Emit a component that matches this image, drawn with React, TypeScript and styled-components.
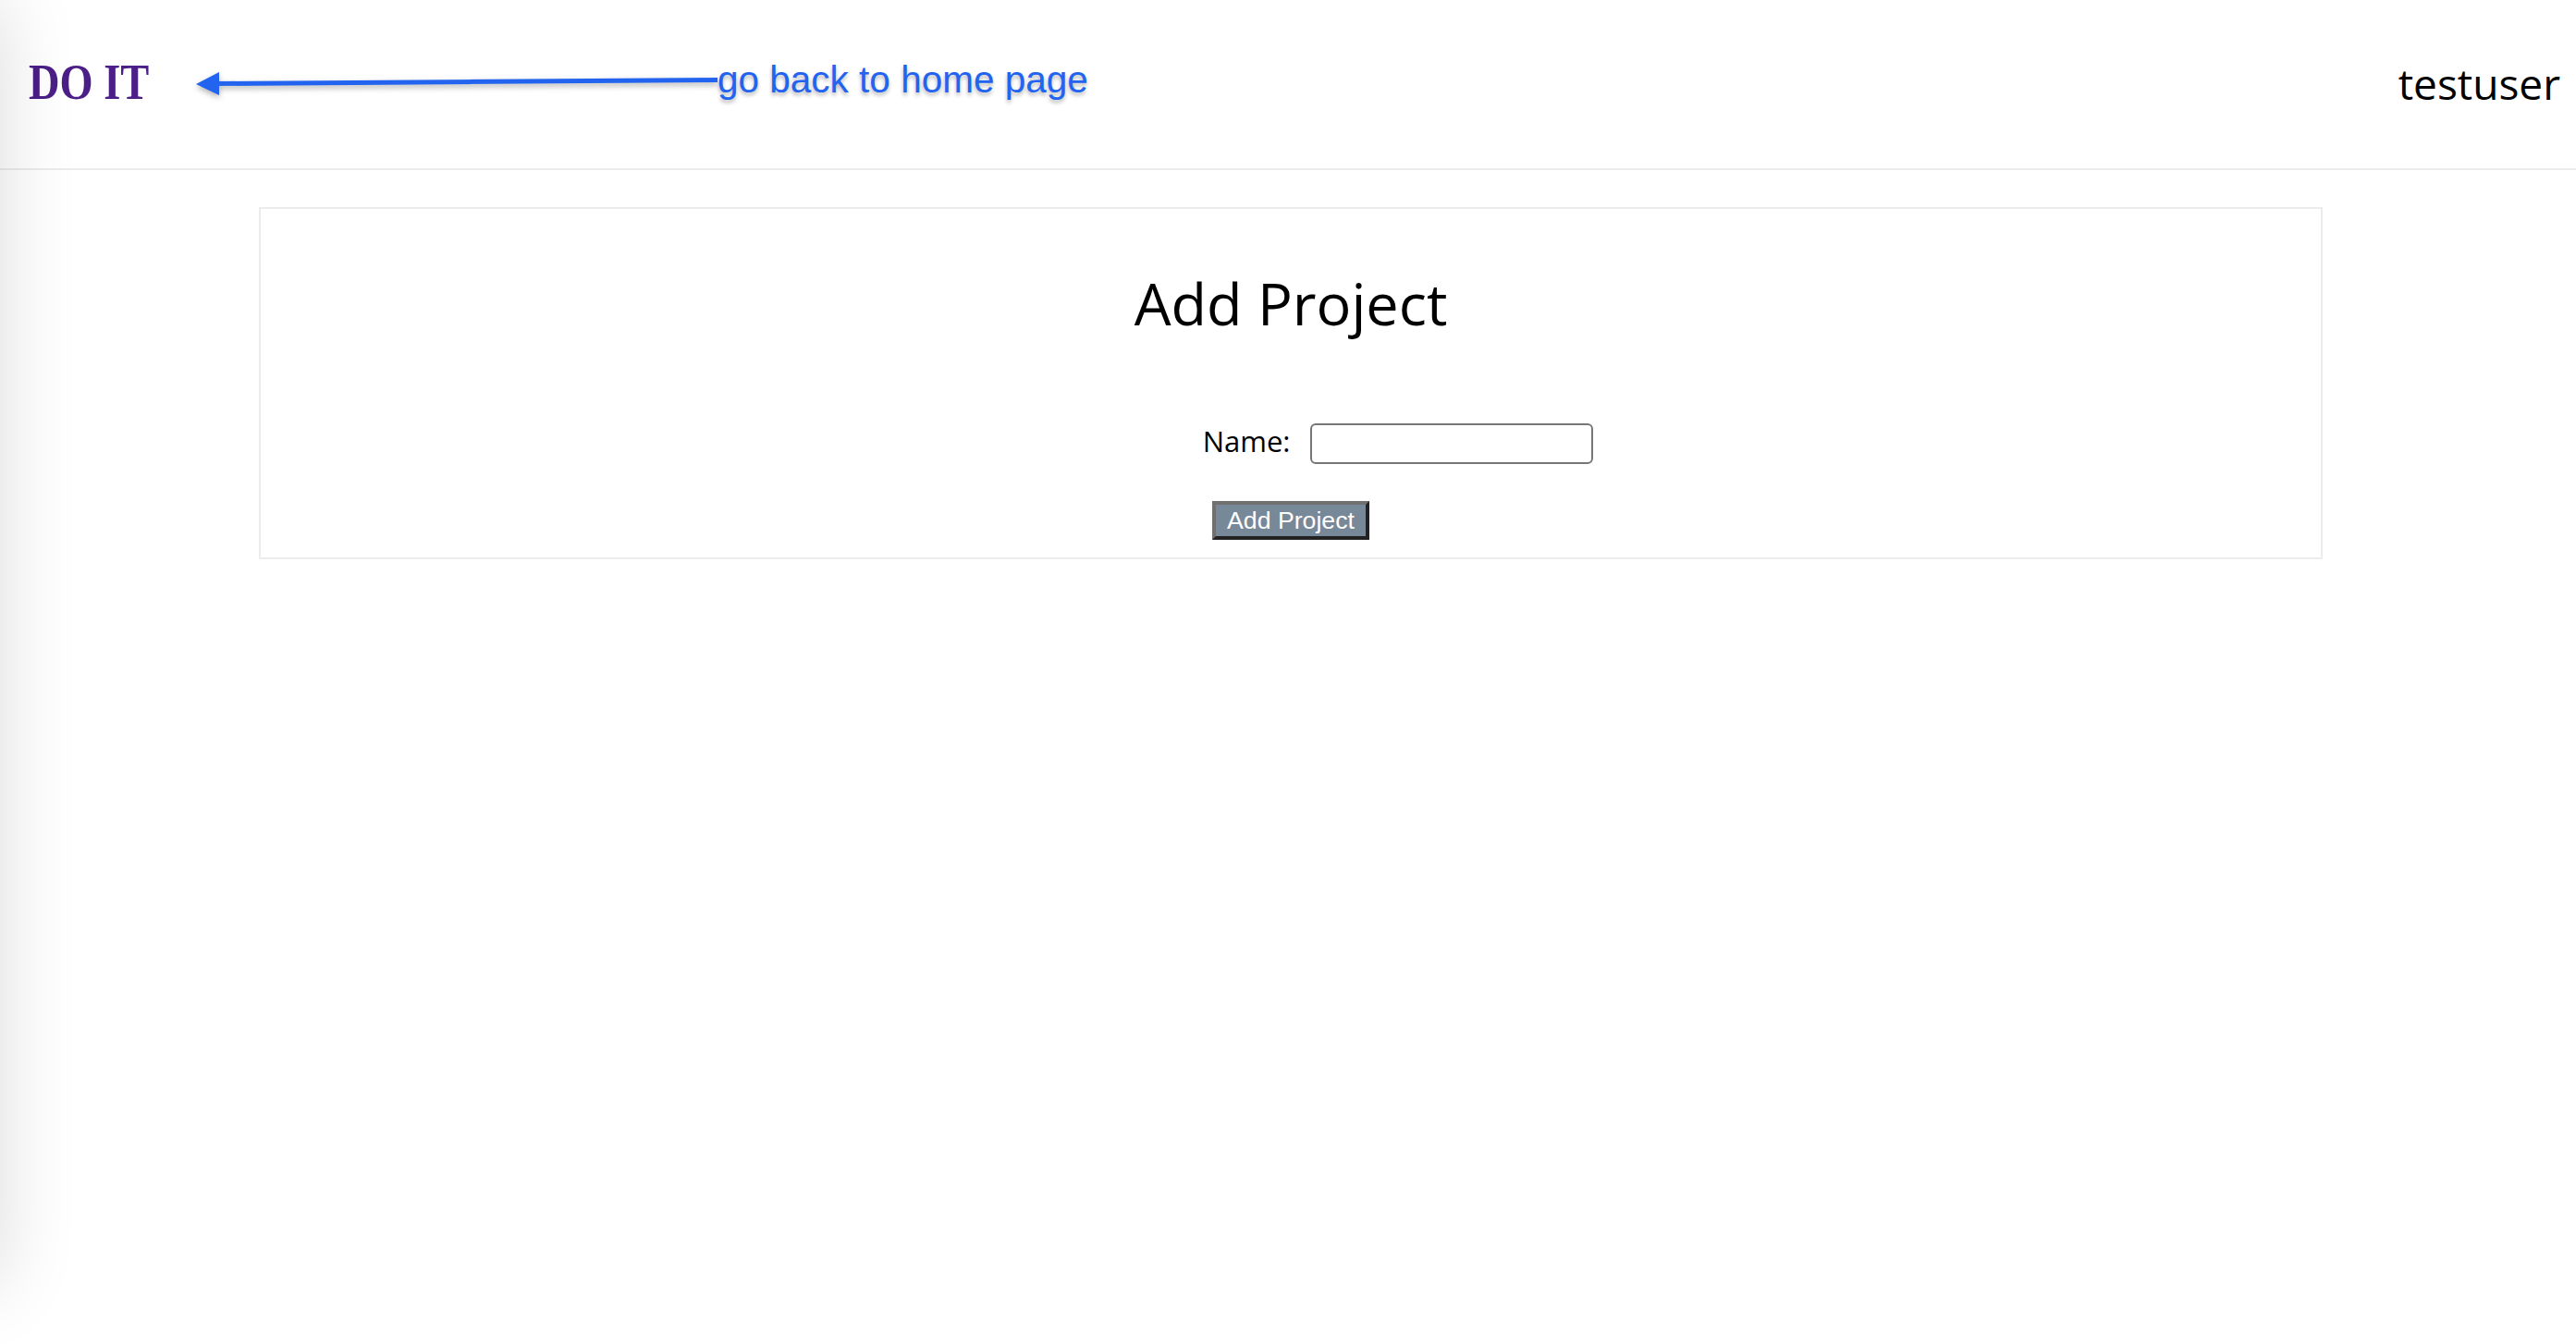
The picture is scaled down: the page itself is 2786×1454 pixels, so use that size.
import React from "react";
import styled, { createGlobalStyle } from "styled-components";

const GlobalStyle = createGlobalStyle`
  html, body {
    margin: 0;
    padding: 0;
    background: #ffffff;
  }
  body {
    font-family: "Open Sans", "Liberation Sans", sans-serif;
    color: #000000;
  }
  * {
    box-sizing: border-box;
  }
`;

const Drawer = styled.aside`
  position: fixed;
  top: 0;
  left: 0;
  bottom: 64px;
  width: 320px;
  transform: translateX(-100%);
  background: #ffffff;
  box-shadow: 0 0 80px rgba(0, 0, 0, 0.14);
  z-index: 10;
  pointer-events: none;
`;

const Page = styled.div`
  min-height: 100vh;
  background: #ffffff;
`;

const Header = styled.header`
  display: flex;
  align-items: center;
  height: 184px;
  padding: 0 17px 0 31px;
  border-bottom: 2px solid #ececec;
`;

const Logo = styled.a`
  display: block;
  width: 131px;
  font-family: "Liberation Serif", "Times New Roman", serif;
  font-weight: 700;
  font-size: 54px;
  line-height: 1;
  color: #4b1f87;
  text-decoration: none;
  white-space: nowrap;
  transform: scaleX(0.86);
  transform-origin: left center;
  margin-bottom: 4px;
`;

const Annotation = styled.div`
  display: flex;
  align-items: center;
  margin-left: 50px;
`;

const ArrowSvg = styled.svg`
  display: block;
  width: 564px;
  height: 32px;
  overflow: visible;
  filter: drop-shadow(0 3px 3px rgba(0, 0, 0, 0.3));
`;

const AnnotationText = styled.span`
  font-family: "Liberation Sans", Arial, sans-serif;
  font-size: 40.5px;
  line-height: 1;
  color: #2264ef;
  text-shadow: 0 3px 4px rgba(0, 0, 0, 0.3);
  margin-bottom: 10px;
  white-space: nowrap;
`;

const Spacer = styled.div`
  flex: 1;
`;

const UserName = styled.span`
  font-family: "Open Sans", "Liberation Sans", sans-serif;
  font-size: 46px;
  font-weight: 500;
  line-height: 1;
  color: #000000;
  margin-bottom: 3px;
`;

const Main = styled.main`
  padding: 40px 274px 0 280px;
`;

const Card = styled.section`
  display: flex;
  flex-direction: column;
  align-items: center;
  border: 2px solid #ececec;
  padding: 70px 0 19px;
  background: #ffffff;
`;

const Title = styled.h1`
  margin: 0;
  font-family: "Open Sans", "Liberation Sans", sans-serif;
  font-size: 63px;
  font-weight: 500;
  line-height: 1;
  color: #000000;
`;

const FieldRow = styled.div`
  display: grid;
  grid-template-columns: 1fr 1fr;
  column-gap: 21px;
  align-items: center;
  width: 100%;
  padding-left: 20px;
  margin-top: 99px;
`;

const Label = styled.label`
  justify-self: end;
  font-family: "Open Sans", "Liberation Sans", sans-serif;
  font-size: 31px;
  font-weight: 500;
  line-height: 1;
  color: #000000;
  margin-bottom: 5px;
`;

const TextInput = styled.input`
  justify-self: start;
  width: 306px;
  height: 44px;
  border: 2px solid #767676;
  border-radius: 6px;
  background: #ffffff;
  padding: 0 8px;
  font-size: 26px;
  outline: none;
`;

const SubmitButton = styled.button`
  margin-top: 40px;
  height: 42px;
  padding: 0 12px;
  border: 4px solid;
  border-color: #707070 #222222 #222222 #707070;
  background: #778899;
  color: #ffffff;
  font-family: "Liberation Sans", Arial, sans-serif;
  font-size: 26.67px;
  line-height: 1;
  cursor: pointer;
`;

export default function App() {
  return (
    <Page>
      <GlobalStyle />
      <Drawer />
      <Header>
        <Logo href="#">DO IT</Logo>
        <Annotation>
          <ArrowSvg viewBox="0 0 564 32">
            <line x1="18" y1="15.5" x2="564" y2="11.5" stroke="#2264ef" strokeWidth="5" />
            <polygon points="0,16 25,3 25,28" fill="#2264ef" />
          </ArrowSvg>
          <AnnotationText>go back to home page</AnnotationText>
        </Annotation>
        <Spacer />
        <UserName>testuser</UserName>
      </Header>
      <Main>
        <Card>
          <Title>Add Project</Title>
          <FieldRow>
            <Label htmlFor="project-name">Name:</Label>
            <TextInput id="project-name" type="text" />
          </FieldRow>
          <SubmitButton type="button">Add Project</SubmitButton>
        </Card>
      </Main>
    </Page>
  );
}
